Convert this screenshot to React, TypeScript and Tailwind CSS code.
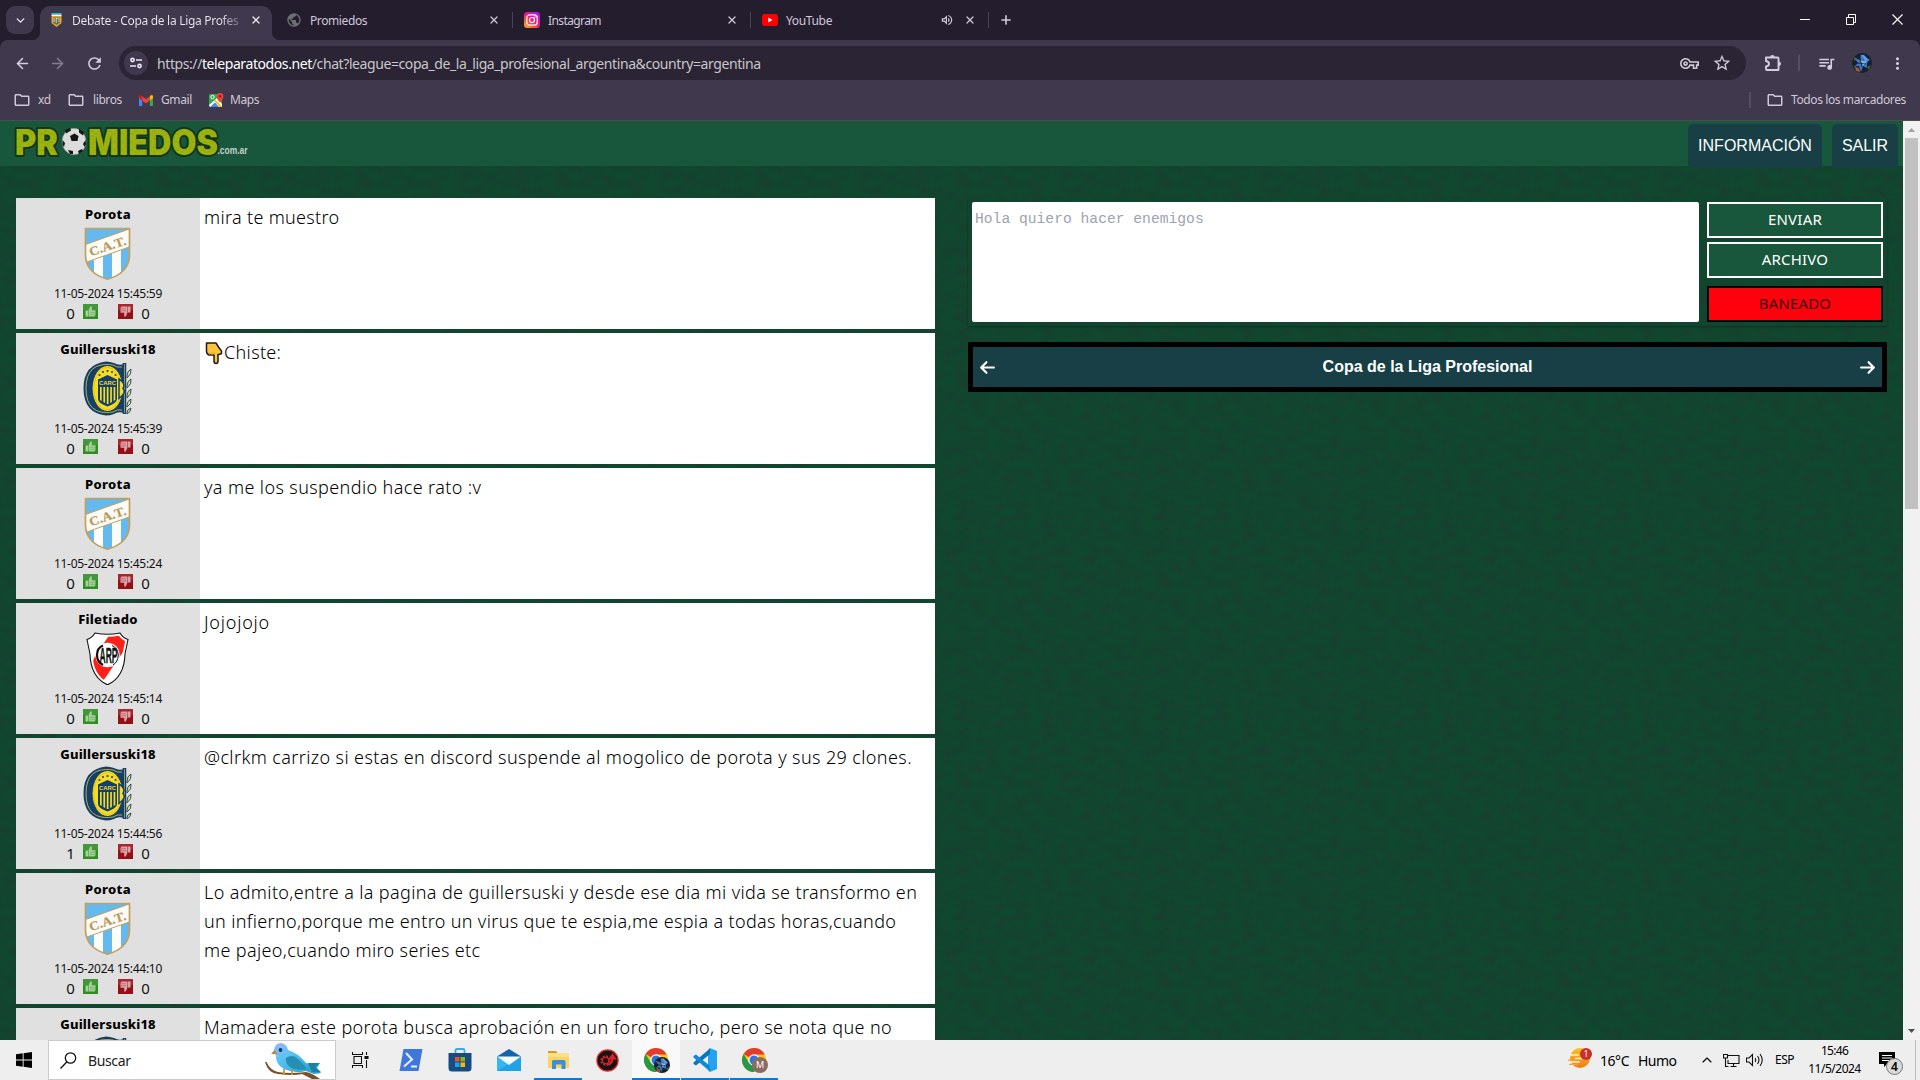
import type { ReactNode } from "react";
import { ChevronDown, ChevronUp, X, Plus, ArrowLeft, ArrowRight } from "lucide-react";
import { MdOutlineFolder, MdOutlineStarBorder, MdOutlineQueueMusic, MdMoreVert, MdOutlineVpnKey, MdOutlineVolumeUp, MdPublic, MdRefresh } from "react-icons/md";
import { FaArrowLeft, FaArrowRight } from "react-icons/fa6";

/* ---------- club crests ---------- */

function Tucuman() {
  const shield = "M1.5 1.5H45.500V28C45.500 41 36 49 23.500 52.200C11 49 1.500 41 1.500 28Z";
  return (
    <svg width="47" height="53" viewBox="0 0 47 53" className="-translate-x-px">
      <defs>
        <clipPath id="cat"><path d={shield} /></clipPath>
      </defs>
      <g clipPath="url(#cat)">
        <rect width="48" height="54" fill="#64b9ef" />
        <path d="M10 20h9v34h-9zM28 20h9v34h-9z" fill="#fbfdfb" />
        <path d="M0 18L48 1V19L0 36Z" fill="#fbfbf6" stroke="#c2a05f" strokeWidth="1" />
      </g>
      <path d={shield} fill="none" stroke="#c2a05f" strokeWidth="1.700" />
      <text x="23.500" y="23.500" textAnchor="middle" textLength="38" lengthAdjust="spacingAndGlyphs" transform="rotate(-18 23.500 19)" className="font-['Liberation_Serif'] text-[12.5px] font-bold" fill="#b9975a" stroke="#b9975a" strokeWidth=".2">C.A.T.</text>
    </svg>
  );
}

function Rosario() {
  return (
    <svg width="49" height="55" viewBox="0 0 49 55" className="-translate-x-px">
      <path d="M41 3V52Q35 50 31 53Q27 54.500 23 54.500Q.5 52 .5 27.500Q.5 3 23 .5Q27 .5 31 2Q36 5 41 3Z" fill="#143f6b" />
      <path d="M39 6Q34 7 30 4Q3 0 3 27.500Q3 55 30 51Q34 48 39 49" fill="none" stroke="#c9bb45" strokeWidth=".9" />
      <path d="M41.500 2V53" stroke="#143f6b" strokeWidth="3.500" />
      <path d="M41.500 3V52" stroke="#b9ad4a" strokeWidth=".8" />
      <path d="M44 15q0-5 4-7q1 5-4 9zM44 25q0-5 4-7q1 5-4 9zM44 35q0-5 4-7q1 5-4 9zM44 44q0-4 4-6q1 5-4 8zM44 52q0-4 4-5q0 4-4 6z" fill="#e6dc7a" stroke="#143f6b" strokeWidth=".9" />
      <ellipse cx="24.500" cy="27.500" rx="15.500" ry="23" fill="#f8dc20" stroke="#0f3a63" strokeWidth="1" />
      <ellipse cx="24.500" cy="27.500" rx="13.800" ry="21" fill="none" stroke="#cdb52a" strokeWidth=".6" />
      <path d="M36 18q7 4 4 9.500q4 4-4 10z" fill="#f8dc20" stroke="#143f6b" strokeWidth="1.500" />
      <path d="M15 18.500L24.500 14L34 18.500V38Q34 42 24.500 45.500Q15 42 15 38Z" fill="#143f6b" />
      <path d="M17 26h1.700v14l-1.700-1zM20.400 26h1.700v16l-1.700-1zM23.800 26h1.700v17h-1.700zM27.200 26h1.700v15l-1.700 1zM30.600 26h1.700v13l-1.700 1z" fill="#f8dc20" />
      <text x="24.500" y="23.800" textAnchor="middle" textLength="17" lengthAdjust="spacingAndGlyphs" className="font-['Liberation_Sans'] text-[6px] font-bold" fill="#f8dc20">CARC</text>
      <g fill="#143f6b"><circle cx="16.500" cy="14" r="1" /><circle cx="20" cy="11" r="1" /><circle cx="24.500" cy="10" r="1.100" /><circle cx="29" cy="11" r="1" /><circle cx="32.500" cy="14" r="1" /></g>
    </svg>
  );
}

function River() {
  const d = "M1 7.500Q6 6 9 1Q21.500 3.500 34 1Q37 6 42 7.500L39 22C38.500 39 31 48.500 21.500 52.800C12 48.500 4.500 39 4 22Z";
  return (
    <svg width="43" height="53.500" viewBox="0 0 43 53.500" className="-translate-x-px">
      <defs><clipPath id="carp"><path d={d} /></clipPath></defs>
      <g clipPath="url(#carp)">
        <rect width="44" height="54" fill="#fff" />
        <path d="M24 2H44L37 20L15 52L3 42L8 26Z" fill="#ff2119" />
      </g>
      <path d={d} fill="none" stroke="#fff" strokeWidth="5" clipPath="url(#carp)" />
      <path d={d} fill="none" stroke="#151515" strokeWidth="1.100" />
      <circle cx="21.500" cy="23" r="12.200" fill="#fff" />
      <path d="M17 13.500Q11 16 11 23Q11 30 17 33" fill="none" stroke="#111" strokeWidth="2.200" />
      <path d="M26 13.500Q32 16 32.300 23Q32 30 27 33" fill="none" stroke="#111" strokeWidth="1" />
      <text x="22.500" y="31" textAnchor="middle" textLength="18" lengthAdjust="spacingAndGlyphs" className="font-['Liberation_Sans'] text-[22px] font-bold" fill="#111" stroke="#111" strokeWidth=".3">ARP</text>
    </svg>
  );
}

function Thumb({ down }: { down?: boolean }) {
  return (
    <svg width="15" height="15" viewBox="0 0 15 15">
      <rect width="15" height="15" fill={down ? "#960f16" : "#2f8d22"} />
      <rect width="15" height="6" fill={down ? "#a8262e" : "#44963a"} />
      <g transform={down ? "rotate(180 7.5 7.5)" : undefined}>
        <path d="M2.500 6.500h2.500v6H2.500zM5.500 6.500L7.200 2.500h1.600v3.700H12.500V11L11.500 12.500H5.500z" fill={down ? "#d9a3a7" : "#a5d29b"} />
        <path d="M7 8.300h5M7 10.300h5" stroke={down ? "#b5636a" : "#6bad62"} strokeWidth=".7" />
      </g>
    </svg>
  );
}

/* ---------- chat ---------- */

type Post = { user: string; nameClass: string; crest: ReactNode; time: string; up: number; hand?: boolean; lines: { text: string; tracking: string }[] };

const porota = { user: "Porota", nameClass: "tracking-[0.38px]", crest: <Tucuman /> };
const guiller = { user: "Guillersuski18", nameClass: "tracking-[0.17px]", crest: <Rosario /> };
const filetiado = { user: "Filetiado", nameClass: "tracking-[0.25px]", crest: <River /> };

const posts: Post[] = [
  { ...porota, time: "15:45:59", up: 0, lines: [{ text: "mira te muestro", tracking: "tracking-[0.32px]" }] },
  { ...guiller, time: "15:45:39", up: 0, hand: true, lines: [{ text: "Chiste:", tracking: "tracking-[0.33px]" }] },
  { ...porota, time: "15:45:24", up: 0, lines: [{ text: "ya me los suspendio hace rato :v", tracking: "tracking-[0.39px]" }] },
  { ...filetiado, time: "15:45:14", up: 0, lines: [{ text: "Jojojojo", tracking: "tracking-[0.8px]" }] },
  { ...guiller, time: "15:44:56", up: 1, lines: [{ text: "@clrkm carrizo si estas en discord suspende al mogolico de porota y sus 29 clones.", tracking: "tracking-[0.39px]" }] },
  {
    ...porota, time: "15:44:10", up: 0,
    lines: [
      { text: "Lo admito,entre a la pagina de guillersuski y desde ese dia mi vida se transformo en", tracking: "tracking-[0.37px]" },
      { text: "un infierno,porque me entro un virus que te espia,me espia a todas horas,cuando", tracking: "tracking-[0.345px]" },
      { text: "me pajeo,cuando miro series etc", tracking: "tracking-[0.36px]" },
    ],
  },
  { ...guiller, time: "", up: 0, lines: [{ text: "Mamadera este porota busca aprobación en un foro trucho, pero se nota que no", tracking: "tracking-[0.39px]" }] },
];

function PointingHand() {
  return (
    <svg width="20" height="24" viewBox="0 0 20 24" className="shrink-0">
      <path d="M2.500 2H12L14.500 6L17.500 10V12.500L15 13.500H14V20Q14 22.500 12 22.500Q10 22.500 10 20V14H5Q2.500 13 2.500 10Z" fill="#fcc43c" stroke="#1d1d1d" strokeWidth="1.500" strokeLinejoin="round" />
      <path d="M5.500 13.500V11.500M8 14V11.500M10.500 14V11.500" stroke="#e09a1c" strokeWidth="1" />
    </svg>
  );
}

function PostRow({ p }: { p: Post }) {
  return (
    <article className="flex h-[131px] shrink-0 bg-white">
      <div className="flex w-[184px] shrink-0 flex-col items-center bg-[#e0e0e0] pt-2">
        <span className={`h-4 text-[13px] leading-4 font-extrabold text-black ${p.nameClass}`}>{p.user}</span>
        <div className="mt-1 flex h-[55px] w-[183px] items-center justify-center">{p.crest}</div>
        {p.time && (
          <>
            <span className="mt-[5px] h-4 text-[12px] leading-4 tracking-[-0.28px] text-[#111]">11-05-2024 {p.time}</span>
            <div className="mt-[2px] flex h-[15px] items-center text-[15px] leading-[15px] text-[#111]">
              <span className="mr-2 w-[9px] translate-y-[2px] text-center">{p.up}</span>
              <Thumb />
              <span className="w-5" />
              <Thumb down />
              <span className="ml-2 w-[9px] translate-y-[2px] text-center">0</span>
            </div>
          </>
        )}
      </div>
      <div className="flex flex-col px-1 pt-[5px] text-[18px] leading-[29px] font-light whitespace-pre text-black">
        {p.lines.map((l) => (
          <span key={l.text} className="flex items-center">
            {p.hand && <PointingHand />}
            <span className={l.tracking}>{l.text}</span>
          </span>
        ))}
      </div>
    </article>
  );
}

function Logo() {
  return (
    <svg width="244" height="40" viewBox="0 0 244 40" className="font-[Inter]">
      <defs>
        <pattern id="grunge" width="9" height="8" patternUnits="userSpaceOnUse">
          <rect width="9" height="8" fill="#9db40f" />
          <path d="M0 2h5M4 5h5M1 7h3" stroke="#8ba10d" strokeWidth=".8" />
        </pattern>
      </defs>
      <g strokeLinejoin="round" className="text-[35px] font-black [paint-order:stroke]">
        <text x="7" y="34" textLength="43" lengthAdjust="spacingAndGlyphs" fill="url(#grunge)" stroke="#12351c" strokeWidth="4">PR</text>
        <text x="80" y="34" textLength="130" lengthAdjust="spacingAndGlyphs" fill="url(#grunge)" stroke="#12351c" strokeWidth="4">MIEDOS</text>
      </g>
      <ellipse cx="66" cy="20.500" rx="12" ry="13.200" fill="#dcdcdc" stroke="#777" strokeWidth=".5" />
      <path d="M62 15l4.500-2.500 4 2.500-1 5h-6zM57 9l5-2 1 2.500-5 3zM71 7.500l5 4-1 3-4-3zM54.500 19l2.500 3-1 4-1.500-2zM77.500 19l-2.500 4 1.500 3 1.500-3zM60 29l5 1v3h-3zM70 30l4-2 1 2-4 3z" fill="#161616" />
      <text x="209.500" y="33" textLength="30" lengthAdjust="spacingAndGlyphs" className="font-['Liberation_Sans'] text-[11px] font-bold" fill="#c4d0c8">.com.ar</text>
    </svg>
  );
}

/* ---------- browser chrome ---------- */

function LigaIcon() {
  return (
    <svg width="11" height="14" viewBox="0 0 11 14">
      <path d="M0.500 3H10.500V10L5.500 14L.500 10Z" fill="#e6a72e" />
      <rect x=".5" width="10" height="1.600" fill="#35b4dd" />
      <rect x=".5" y="1.600" width="10" height="1.400" fill="#fff" />
      <path d="M2 4.500H9V9.500L5.500 12L2 9.500Z" fill="#5b6a57" />
      <path d="M3 5v4M5.200 5v5M5.200 5.500h1.600M8 5v4" stroke="#f4e6b3" strokeWidth=".9" />
    </svg>
  );
}

function InstagramIcon() {
  return (
    <svg width="16" height="16" viewBox="0 0 16 16">
      <defs>
        <linearGradient id="ig" x1="0" y1="1" x2=".8" y2="0">
          <stop offset="0" stopColor="#ffc83c" /><stop offset=".3" stopColor="#ff5a2a" /><stop offset=".6" stopColor="#f0148c" /><stop offset="1" stopColor="#a01ee6" />
        </linearGradient>
      </defs>
      <rect width="16" height="16" rx="3.500" fill="url(#ig)" />
      <rect x="2.800" y="2.800" width="10.400" height="10.400" rx="3" fill="none" stroke="#fff" strokeWidth="1.200" />
      <circle cx="8" cy="8" r="2.500" fill="none" stroke="#fff" strokeWidth="1.200" />
      <circle cx="11" cy="5" r=".7" fill="#fff" />
    </svg>
  );
}

function YoutubeIcon() {
  return (
    <svg width="16" height="12" viewBox="0 0 16 12">
      <rect width="16" height="12" rx="2.800" fill="#fd0000" />
      <path d="M6.300 3.500v5L10.500 6z" fill="#fff" />
    </svg>
  );
}

function Tab({ icon, title, tracking, active, audio }: { icon: ReactNode; title: string; tracking: string; active?: boolean; audio?: boolean }) {
  return (
    <div className={`relative mr-1.5 flex h-[34px] w-[232px] shrink-0 items-center pb-1.5 pl-2 ${active ? "rounded-t-[10px] bg-[#40384c]" : ""}`}>
      {active && (
        <>
          <span className="absolute bottom-0 -left-2 size-2 bg-[radial-gradient(circle_at_0_0,#241d2e_8px,#40384c_8.5px)]" />
          <span className="absolute -right-2 bottom-0 size-2 bg-[radial-gradient(circle_at_100%_0,#241d2e_8px,#40384c_8.5px)]" />
        </>
      )}
      <span className="mr-2 flex w-4 items-center justify-center">{icon}</span>
      <span className={`flex-1 overflow-hidden pt-0.5 whitespace-nowrap ${tracking} ${active ? "mr-[9px] bg-linear-to-r from-[#eae6f2] from-88% to-[#6a6177] bg-clip-text text-transparent" : "text-[#cfc8da]"}`}>{title}</span>
      {audio && <MdOutlineVolumeUp className="mr-2.5 size-3.5 text-[#cfc8da]" />}
      <X className={`mr-2.5 size-3 ${active ? "text-[#eae6f2]" : "text-[#cfc8da]"}`} strokeWidth={2.6} />
      {!active && <span className="absolute top-1.5 -right-[3px] h-4 w-px bg-[#4a4257]" />}
    </div>
  );
}

function Avatar({ size }: { size: string }) {
  return (
    <svg viewBox="0 0 20 20" className={`${size} rounded-full`}>
      <rect width="20" height="20" fill="#142033" />
      <path d="M2 5L8 7L9 1L12 7L18 6L15 10L15 15L11 13L9 19L7 13L3 13L6 10Z" fill="#3f78bd" />
      <path d="M8 7L11 13L15 8L12 8.500Z" fill="#8ab8e8" />
      <path d="M9 2l3 0 5 5-4 1z" fill="#5f9fe0" />
      <path d="M1 12l4 2 1 5zM2 4l3 1-3 3zM15 14l4-2-2 5z" fill="#52602e" />
      <path d="M3 14l4 1 1 4-4-1z" fill="#a2573b" />
      <path d="M5 10l9 1M8 5l2 9" stroke="#142033" strokeWidth=".8" />
    </svg>
  );
}

function PuzzleIcon() {
  return (
    <svg width="20" height="20" viewBox="0 0 20 20" className="ml-[17px]" fill="none" stroke="currentColor" strokeWidth="1.900" strokeLinejoin="round">
      <path d="M3 4.500H14.500Q15.500 4.500 15.500 5.500V17H4Q3 17 3 16V13.500Q6 13 6 10.700Q6 8.500 3 8z" />
      <path d="M7.200 4.200a2.200 2.200 0 0 1 4.400 0zM15.800 8.500a2.200 2.200 0 0 1 0 4.400z" fill="currentColor" stroke="none" />
    </svg>
  );
}

function GmailIcon() {
  return (
    <svg width="14" height="11" viewBox="0 0 14 11">
      <path d="M0 2V10.200Q0 11 .8 11H3.200V4.500z" fill="#4285f4" />
      <path d="M14 2V10.200Q14 11 13.200 11H10.800V4.500z" fill="#34a853" />
      <path d="M10.800 1.200L12 .3Q14-.5 14 1.700V3L10.800 5.500z" fill="#fbbc04" />
      <path d="M3.200 1.200V5.500L0 3V1.700Q0-.5 2 .3z" fill="#c5221f" />
      <path d="M3.200 1.200L7 4.100L10.800 1.200V5.500L7 8.400L3.200 5.500z" fill="#ea4335" />
    </svg>
  );
}

function MapsIcon() {
  return (
    <svg width="15" height="15" viewBox="0 0 15 15">
      <rect y="1" width="13" height="13" rx="1" fill="#34a853" />
      <path d="M0 12L8 5L13 11V14H1z" fill="#fff" />
      <path d="M6 6.500L13.500 14H11L5 8z" fill="#fbbc04" />
      <path d="M1 14L6 9.500L10 14z" fill="#4285f4" />
      <circle cx="3.500" cy="4" r="1.700" fill="none" stroke="#fff" strokeWidth=".9" />
      <path d="M11 0a3.400 3.400 0 0 1 3.400 3.400Q14.400 5.500 11 9.500Q7.600 5.500 7.600 3.400A3.400 3.400 0 0 1 11 0z" fill="#ea4335" />
      <circle cx="11" cy="3.300" r="1.200" fill="#8c1f16" />
    </svg>
  );
}

function Chrome() {
  return (
    <header className="flex h-[121px] shrink-0 flex-col border-b border-[#4f4950] bg-[#241d2e] text-[12px]">
      <div className="flex h-10 shrink-0 items-start pt-1.5 pl-1.5">
        <span className="mr-1.5 flex size-7 items-center justify-center rounded-[9px] bg-[#40384c] text-[#eae6f2]"><ChevronDown size={13} strokeWidth={2.6} /></span>
        <Tab active icon={<LigaIcon />} title="Debate - Copa de la Liga Profes" tracking="tracking-[-0.3px]" />
        <Tab icon={<MdPublic className="size-4 text-[#6c6f73]" />} title="Promiedos" tracking="tracking-[-0.4px]" />
        <Tab icon={<InstagramIcon />} title="Instagram" tracking="tracking-[-0.6px]" />
        <Tab icon={<YoutubeIcon />} title="YouTube" tracking="tracking-[-0.35px]" audio />
        <Plus className="mt-[7px] ml-[7px] size-3.5 text-[#cfc8da]" strokeWidth={2.8} />
        <div className="mt-2 mr-[17px] ml-auto flex items-center gap-9 text-white">
          <span className="h-px w-2.5 bg-white" />
          <svg width="10" height="11" viewBox="0 0 10 11" fill="none" stroke="#fff"><path d="M.5 3.500h7v7h-7zM2.500 3V.5h7v8H8" /></svg>
          <svg width="11" height="11" viewBox="0 0 11 11" stroke="#fff" strokeWidth="1.100"><path d="M.5.500l10 10M10.500.500l-10 10" /></svg>
        </div>
      </div>
      <div className="flex h-20 flex-col rounded-t-lg bg-[#40384c]">
        <div className="flex h-[46px] items-center pl-[14px] text-[#d5cde2]">
          <ArrowLeft className="size-[17px]" strokeWidth={2.3} />
          <ArrowRight className="ml-[18px] size-[17px] text-[#837b90]" strokeWidth={2.3} />
          <MdRefresh className="ml-[19px] size-[19px]" />
          <div className="ml-[15px] flex h-[34px] w-[1627px] items-center rounded-full bg-[#2a2434] pl-[5px]">
            <span className="flex size-6 items-center justify-center rounded-full bg-[#40384c]">
              <svg width="12" height="12" viewBox="0 0 12 12" fill="none" stroke="#eae6f2" strokeWidth="1.600"><circle cx="2.500" cy="3" r="1.600" /><path d="M6 3h6M0 9h6" /><circle cx="9.500" cy="9" r="1.600" /></svg>
            </span>
            <span className="ml-[9px] text-[14px] tracking-[-0.415px] whitespace-nowrap text-[#c9c6cc]">https://<span className="text-white">teleparatodos.net</span>/chat?league=copa_de_la_liga_profesional_argentina&amp;country=argentina</span>
            <MdOutlineVpnKey className="ml-auto size-[19px] text-[#cfcad6]" />
            <MdOutlineStarBorder className="mr-[14px] ml-[13px] size-[20px] text-[#cfcad6]" />
          </div>
          <PuzzleIcon />
          <span className="ml-[15px] h-4 w-0.5 bg-[#564e64]" />
          <MdOutlineQueueMusic className="ml-[17px] size-[19px]" />
          <span className="ml-4 flex"><Avatar size="size-5" /></span>
          <MdMoreVert className="ml-[16px] size-[19px]" />
        </div>
        <div className="flex h-[28px] items-center pl-[13px] tracking-[-0.4px] whitespace-nowrap text-[#cfc8d6]">
          <MdOutlineFolder className="size-[18px]" /><span className="ml-[7px] w-[12px]">xd</span>
          <MdOutlineFolder className="ml-[17px] size-[18px]" /><span className="ml-[8px] w-[29px]">libros</span>
          <span className="ml-[17px]"><GmailIcon /></span><span className="ml-[8px] w-[31px]">Gmail</span>
          <span className="ml-[17px]"><MapsIcon /></span><span className="ml-[6px] w-[29px]">Maps</span>
          <span className="ml-auto h-4 w-0.5 bg-[#564e64]" />
          <MdOutlineFolder className="ml-[15px] size-[18px]" /><span className="ml-[7px] w-[129px]">Todos los marcadores</span>
        </div>
      </div>
    </header>
  );
}

/* ---------- taskbar ---------- */

function Bird() {
  return (
    <svg width="60" height="38" viewBox="0 0 60 38">
      <defs><linearGradient id="bird" x1="0" y1="0" x2="1" y2="1"><stop offset="0" stopColor="#9fb4f5" /><stop offset=".35" stopColor="#5cc3f4" /><stop offset="1" stopColor="#1c9bc4" /></linearGradient></defs>
      <path d="M1 21Q4 32 14 33Q30 35 38 33Q44 36 48 38H56Q48 32 42 31Q25 33 14 31Q6 29 2.500 21Z" fill="#7a5128" />
      <path d="M10 9Q11 2 17 2Q23 3 24 9Q34 12 42 22L52 24L56 22L53 27L57 32L50 33L42 30Q32 33 20 28Q11 23 12 14L8 12Z" fill="url(#bird)" />
      <path d="M22 17Q28 13 33 17Q39 22 43 28Q32 30 26 26Q21 22 22 17Z" fill="#2590b4" />
      <path d="M44 22L56 22L51 26L57 31L48 31Z" fill="#1d7fa8" />
      <path d="M11 9L7 13L13 13Z" fill="#b98b2c" /><circle cx="16.500" cy="9" r="1.900" fill="#14356b" />
      <path d="M20 28v6M28 29v5" stroke="#c39a35" strokeWidth="1.800" />
    </svg>
  );
}

function ChromeIcon({ children }: { children: ReactNode }) {
  return (
    <span className="relative flex">
      <svg width="26" height="26" viewBox="0 0 26 26">
        <circle cx="13" cy="13" r="12" fill="#fbc116" />
        <path d="M13 13L2.600 7A12 12 0 0 1 23.400 7L23.400 7.500H13z" fill="#e33b2e" />
        <path d="M2.600 7A12 12 0 0 0 13 25L18 16H8z" fill="#279847" />
        <circle cx="13" cy="13" r="5.700" fill="#fff" /><circle cx="13" cy="13" r="4.500" fill="#2a74e8" />
      </svg>
      <span className="absolute top-[10px] left-[11px] flex size-4">{children}</span>
    </span>
  );
}

function Slot({ children, open, active }: { children: ReactNode; open?: boolean; active?: boolean }) {
  return (
    <span className={`mr-px flex h-10 w-12 items-center justify-center ${active ? "bg-[#f9f9f9]" : ""} ${open ? "border-b-2 border-[#0b78d6] pt-0.5" : ""}`}>
      {children}
    </span>
  );
}

function Taskbar() {
  return (
    <footer className="flex h-10 shrink-0 items-center bg-[#eeeeee] text-black">
      <span className="flex w-12 justify-center">
        <svg width="16" height="16" viewBox="0 0 16 16"><path d="M0 2.300L6.700 1.300V7.600H0zM7.600 1.200L16 0V7.600H7.600zM0 8.400H6.700V14.700L0 13.700zM7.600 8.400H16V16L7.600 14.800z" /></svg>
      </span>
      <div className="flex h-10 w-[288px] items-center border border-[#cccccc] bg-white pl-[11px]">
        <svg width="17" height="17" viewBox="0 0 17 17" fill="none" stroke="#111" strokeWidth="1.300"><circle cx="10.500" cy="6" r="5.200" /><path d="M7 9.800L.5 16.500" /></svg>
        <span className="ml-[11px] text-[14px] tracking-[-0.38px] text-[#222]">Buscar</span>
        <span className="mr-[11px] ml-auto self-end"><Bird /></span>
      </div>
      <span className="mr-[3px] flex h-10 w-12 items-center justify-center">
        <svg width="17" height="16" viewBox="0 0 17 16" fill="none" stroke="#111" strokeWidth="1.100"><path d="M.5 0v2.500h10V0M.5 16v-2.500h10V16M2 4.500h7.500v7H2zM14.500 0v3M14.500 8v8" /><path d="M13 4.500h3v2h-3z" fill="#111" /></svg>
      </span>
      <Slot>
        <svg width="24" height="22" viewBox="0 0 24 22"><path d="M4.500 0H23.500L19.500 22H.5z" fill="#4077dc" /><path d="M7 4l6 6.500-8 7M12 17.500h6" fill="none" stroke="#e9f1ff" strokeWidth="2" /></svg>
      </Slot>
      <Slot>
        <svg width="24" height="24" viewBox="0 0 24 24"><path d="M7.500 6V2.500Q7.500 1 9 1H15Q16.500 1 16.500 2.500V6" fill="none" stroke="#3aa9e8" strokeWidth="1.800" /><path d="M.5 5H23.500V20Q23.500 23.500 20 23.500H4Q.5 23.500 .5 20z" fill="#164b84" /><path d="M7 9h4.500v4.500H7z" fill="#f1512a" /><path d="M12.500 9H17v4.500h-4.500z" fill="#80bb10" /><path d="M7 14.500h4.500V19H7z" fill="#15a4ee" /><path d="M12.500 14.500H17V19h-4.500z" fill="#fcb907" /></svg>
      </Slot>
      <Slot>
        <svg width="24" height="24" viewBox="0 0 24 24"><path d="M0 8.500L12 1L24 8.500V12H0z" fill="#1264ac" /><path d="M0 8.500V23H24z" fill="#35b6f0" /><path d="M24 8.500V23H0z" fill="#1fa3e6" /><path d="M0 8.500h24L12 17z" fill="#f2fafe" /></svg>
      </Slot>
      <Slot open>
        <svg width="23" height="20" viewBox="0 0 23 20"><path d="M1 1H9L11 3.500H1z" fill="#d99a1c" /><path d="M1 3H22V18H1z" fill="#fcd462" /><path d="M1 3H22V7H1z" fill="#fbe08a" /><path d="M5 19V11.500Q5 10 6.500 10H17Q18.500 10 18.500 11.500V19H14.500V14.500H9V19z" fill="#3a8fd6" /></svg>
      </Slot>
      <Slot>
        <svg width="23" height="23" viewBox="0 0 23 23"><circle cx="11.500" cy="11.500" r="10.600" fill="#161313" stroke="#e5262b" strokeWidth="1.200" /><circle cx="9.500" cy="11.500" r="4.200" fill="none" stroke="#d4232a" strokeWidth="2" strokeDasharray="2 1.300" /><circle cx="9.500" cy="11.500" r="3.200" fill="none" stroke="#d4232a" strokeWidth="1.200" /><path d="M11 16Q17 15 16.500 8M13.800 9.500L16.500 6L19 9.500z" fill="none" stroke="#d4232a" strokeWidth="2" /></svg>
      </Slot>
      <Slot open active><ChromeIcon><Avatar size="size-4" /></ChromeIcon></Slot>
      <Slot open>
        <svg width="24" height="24" viewBox="0 0 24 24"><path d="M17 0L24 3V21L17 24L15 22V2z" fill="#25a3f0" /><path d="M17 .5V6L3 17.500L.5 16V14.500z" fill="#0877b9" /><path d="M17 23.500V18L3 6.500L.5 8V9.500z" fill="#0e8ad4" /></svg>
      </Slot>
      <Slot open>
        <ChromeIcon><span className="flex size-4 items-center justify-center rounded-full bg-[#8b6a62] text-[9px] text-white">M</span></ChromeIcon>
      </Slot>
      <div className="ml-auto flex h-10 items-center whitespace-nowrap">
        <svg width="24" height="22" viewBox="0 0 24 22" className="-translate-y-0.5">
          <defs><linearGradient id="smoke" x1="0" y1="0" x2="0" y2="1"><stop offset="0" stopColor="#fcc41c" /><stop offset="1" stopColor="#f07a16" /></linearGradient></defs>
          <circle cx="12" cy="11" r="10" fill="url(#smoke)" />
          <path d="M2 8h9M7 11.500h12M0 15h12" stroke="#fff1d2" strokeWidth="1.300" /><path d="M0 13.200h9M1 17.300h9" stroke="#f5a13a" strokeWidth="1.300" />
          <circle cx="18" cy="7" r="6" fill="#c9302c" /><text x="18" y="10" textAnchor="middle" fill="#fff" className="text-[8px]">1</text>
        </svg>
        <span className="ml-[8px] w-[29px] text-[14px] tracking-[-0.45px]">16°C</span>
        <span className="ml-[9px] w-[38px] text-[14px] tracking-[-0.5px]">Humo</span>
        <ChevronUp className="ml-[23px] size-4" strokeWidth={1.7} />
        <svg width="17" height="15" viewBox="0 0 17 15" fill="none" stroke="#111" strokeWidth="1.100" className="ml-[8px]"><path d="M5 2.500H16V10.500H5V7M10.500 10.500v3M7.500 13.500h6M.5 1.500h4v3.500h-4zM2.500 5v8.500h3" /></svg>
        <svg width="18" height="14" viewBox="0 0 18 14" fill="none" stroke="#111" strokeWidth="1.100" className="ml-[6px]"><path d="M.5 5H3L6.500 1.500v11L3 9H.5zM9 5q1.500 2 0 4M11.500 3q3 4 0 8M14 1q4.500 6 0 12" /></svg>
        <span className="ml-[11px] w-[19px] text-[12px] tracking-[-0.5px]">ESP</span>
        <div className="ml-[14px] flex w-[53px] flex-col items-center text-[12px] leading-[18px]">
          <span className="tracking-[-0.7px]">15:46</span>
          <span className="tracking-[-0.5px]">11/5/2024</span>
        </div>
        <span className="relative mr-[12px] ml-[18px] flex h-5 w-6">
          <svg width="16" height="17" viewBox="0 0 16 17" className="mt-0.5"><path d="M0 0H16V12H8L5 15V12H0z" fill="#000" /><path d="M3 3.500h10M3 6h10M3 8.500h7" stroke="#fff" strokeWidth="1.100" /></svg>
          <span className="absolute top-[8px] left-[7px] flex size-[17px] items-center justify-center rounded-full border border-[#777] bg-[#d9d9d9] text-[12px] leading-none font-semibold">4</span>
        </span>
        <span className="mr-1 h-10 w-px bg-[#bdbdbd]" />
      </div>
    </footer>
  );
}

/* ---------- page ---------- */

function Felt() {
  return (
    <svg className="absolute inset-0 h-full w-full">
      <defs>
        <filter id="felt" x="0" y="0" width="100%" height="100%" colorInterpolationFilters="sRGB">
          <feTurbulence type="fractalNoise" baseFrequency="0.07 0.12" numOctaves="5" seed="4" stitchTiles="stitch" />
          <feColorMatrix values="0 0 0 0 0.11  0 0 0 0 0.23  0 0 0 0 0.19  1.2 0 0 0 -0.36" />
        </filter>
        <pattern id="feltTile" width="200" height="200" patternUnits="userSpaceOnUse"><rect width="200" height="200" filter="url(#felt)" /></pattern>
      </defs>
      <rect width="100%" height="100%" fill="url(#feltTile)" />
    </svg>
  );
}

export default function App() {
  return (
    <div className="flex h-[1080px] w-[1920px] flex-col overflow-hidden font-['Noto_Sans',sans-serif]">
      <Chrome />
      <div className="flex h-[919px] shrink-0 overflow-hidden">
        <main className="relative flex w-[1903px] shrink-0 flex-col bg-[#0f482e]">
          <Felt />
          <div className="relative flex h-[45px] shrink-0 items-start bg-[#18573c] pl-2">
            <Logo />
            <nav className="mt-[3px] mr-[5px] ml-auto flex gap-2.5 font-['Liberation_Sans'] text-[16px] text-white">
              <span className="flex h-11 w-[134px] items-center justify-center rounded-[5px] bg-[#173f45]">INFORMACIÓN</span>
              <span className="flex h-11 w-[66px] items-center justify-center rounded-[5px] bg-[#173f45]">SALIR</span>
            </nav>
          </div>
          <div className="relative flex gap-[33px] pt-8 pl-4">
            <section className="flex h-[842px] w-[919px] shrink-0 flex-col gap-1 overflow-hidden">
              {posts.map((p) => <PostRow key={p.user + p.time} p={p} />)}
            </section>
            <section className="flex w-[919px] shrink-0 flex-col">
              <div className="flex h-32 gap-2 p-1 shadow-[0_1px_2px_rgba(0,0,0,0.3)]">
                <div className="h-[120px] w-[727px] rounded-[2px] bg-white pt-[5px] pl-[3px] font-['Liberation_Mono',monospace] text-[14.67px] leading-6 text-[#9ca3af]">Hola quiero hacer enemigos</div>
                <div className="flex w-44 flex-col text-[15px] text-white">
                  <button className="h-9 border-2 border-white bg-[#18573c] pb-px tracking-[0.25px]">ENVIAR</button>
                  <button className="mt-1 h-9 border-2 border-white bg-[#18573c] pb-px tracking-[0.19px]">ARCHIVO</button>
                  <button className="mt-2 h-9 border-2 border-black bg-[#ff000d] pb-px tracking-[0.17px] text-[#3a0004]">BANEADO</button>
                </div>
              </div>
              <div className="mt-4 flex h-[50px] items-center justify-between border-[5px] border-black bg-[#173f45] px-[6px] text-white">
                <FaArrowLeft className="size-[17px]" />
                <span className="font-['Liberation_Sans'] text-[16px] font-bold">Copa de la Liga Profesional</span>
                <FaArrowRight className="size-[17px]" />
              </div>
            </section>
          </div>
        </main>
        <aside className="flex w-[17px] flex-col items-center bg-[#f1f1f1]">
          <svg width="17" height="17" viewBox="0 0 17 17"><path d="M5 11l3.500-4L12 11z" fill="#a3a3a3" /></svg>
          <span className="h-[371px] w-[13px] bg-[#c1c1c1]" />
          <svg width="17" height="17" viewBox="0 0 17 17" className="mt-auto"><path d="M5 6l3.500 4L12 6z" fill="#505050" /></svg>
        </aside>
      </div>
      <Taskbar />
    </div>
  );
}
